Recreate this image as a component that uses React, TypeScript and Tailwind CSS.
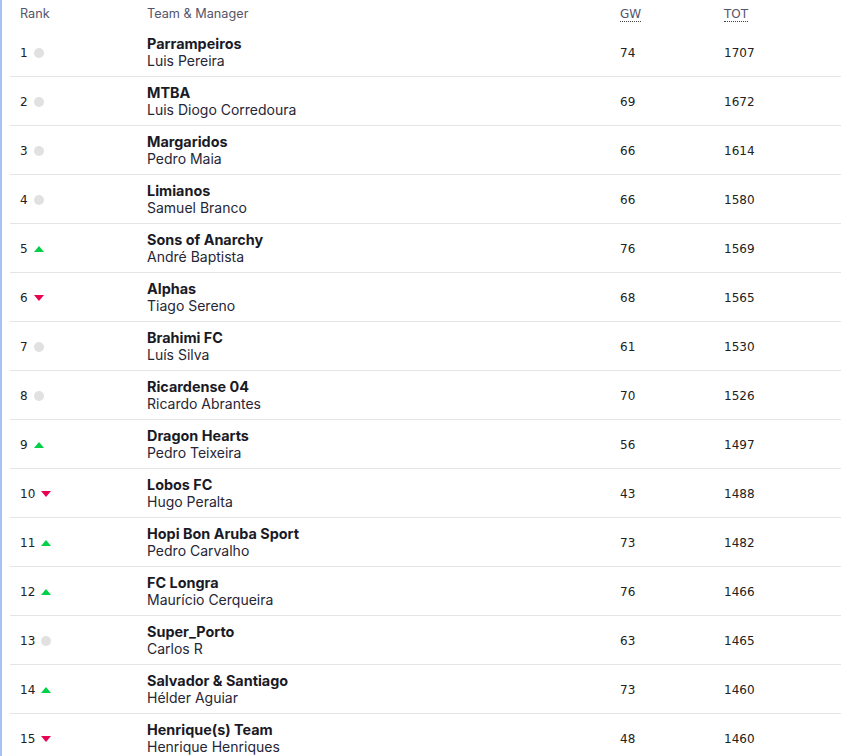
const rows: [number, string, string, string, number, number][] = [
  [1, 'same', 'Parrampeiros', 'Luis Pereira', 74, 1707],
  [2, 'same', 'MTBA', 'Luis Diogo Corredoura', 69, 1672],
  [3, 'same', 'Margaridos', 'Pedro Maia', 66, 1614],
  [4, 'same', 'Limianos', 'Samuel Branco', 66, 1580],
  [5, 'up', 'Sons of Anarchy', 'André Baptista', 76, 1569],
  [6, 'down', 'Alphas', 'Tiago Sereno', 68, 1565],
  [7, 'same', 'Brahimi FC', 'Luís Silva', 61, 1530],
  [8, 'same', 'Ricardense 04', 'Ricardo Abrantes', 70, 1526],
  [9, 'up', 'Dragon Hearts', 'Pedro Teixeira', 56, 1497],
  [10, 'down', 'Lobos FC', 'Hugo Peralta', 43, 1488],
  [11, 'up', 'Hopi Bon Aruba Sport', 'Pedro Carvalho', 73, 1482],
  [12, 'up', 'FC Longra', 'Maurício Cerqueira', 76, 1466],
  [13, 'same', 'Super_Porto', 'Carlos R', 63, 1465],
  [14, 'up', 'Salvador & Santiago', 'Hélder Aguiar', 73, 1460],
  [15, 'down', 'Henrique(s) Team', 'Henrique Henriques', 48, 1460],
];

const Movement = ({ dir }: { dir: string }) => {
  if (dir === 'up')
    return (
      <svg width="10" height="6" viewBox="0 0 10 6" className="ml-[6px]">
        <polygon points="5,0 10,6 0,6" fill="#01d048" />
      </svg>
    );
  if (dir === 'down')
    return (
      <svg width="10" height="6" viewBox="0 0 10 6" className="ml-[6px]">
        <polygon points="0,0 10,0 5,6" fill="#e90052" />
      </svg>
    );
  return <span className="ml-[6px] inline-block h-[10px] w-[10px] rounded-full bg-[#e1e1e1]" />;
};

const App = () => {
  return (
    <div className="min-h-screen bg-white border-l-2 border-[#a4c2f4] font-['Inter',sans-serif] text-[#1f1f2b]">
      <div className="ml-2">
        <div className="grid grid-cols-[137px_473px_104px_1fr] h-[28px] items-center text-[12.7px] text-[#55556a]">
          <div className="pl-[10px]">Rank</div>
          <div>Team &amp; Manager</div>
          <div>
            <abbr className="font-['DejaVu_Sans',sans-serif] text-[12px] no-underline border-b border-dotted border-[#444]">GW</abbr>
          </div>
          <div>
            <abbr className="font-['DejaVu_Sans',sans-serif] text-[12px] no-underline border-b border-dotted border-[#444]">TOT</abbr>
          </div>
        </div>
        {rows.map(([rank, dir, team, manager, gw, tot]) => (
          <div
            key={rank}
            className="grid grid-cols-[137px_473px_104px_1fr] h-[49px] items-center border-b border-[#e5e5e5]"
          >
            <div className="pl-[10px] pt-[2px] flex items-center font-['DejaVu_Sans',sans-serif] text-[12px] text-[#222]">
              <span>{rank}</span>
              <Movement dir={dir} />
            </div>
            <div className="flex flex-col">
              <span className="text-[14.4px] leading-[17px] font-bold text-[#1a1a26]">{team}</span>
              <span className="text-[14px] leading-[18px] text-[#262636]">{manager}</span>
            </div>
            <div className="pt-[2px] font-['DejaVu_Sans',sans-serif] text-[12px] text-[#222]">{gw}</div>
            <div className="pt-[2px] font-['DejaVu_Sans',sans-serif] text-[12px] text-[#222]">{tot}</div>
          </div>
        ))}
      </div>
    </div>
  );
};

export default App;
